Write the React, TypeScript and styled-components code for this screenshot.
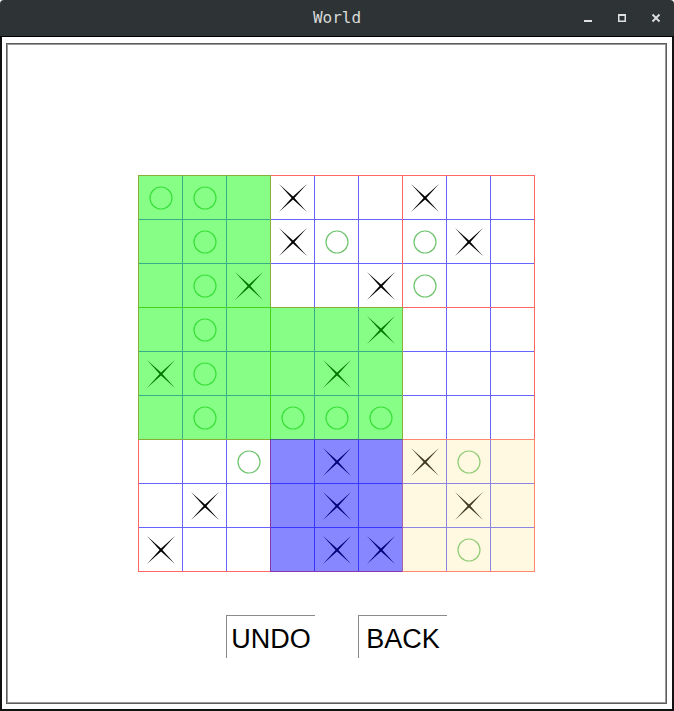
import React from "react";
import styled, { createGlobalStyle } from "styled-components";

const GlobalStyle = createGlobalStyle`
  html, body { margin: 0; padding: 0; background: #ffffff; }
  * { box-sizing: border-box; }
`;

const Window = styled.div`
  width: 674px;
  height: 711px;
  display: flex;
  flex-direction: column;
  background: #ffffff;
`;

const TitleBar = styled.div`
  height: 36px;
  flex: none;
  background: #2e3336;
  border-radius: 4px 4px 0 0;
  display: grid;
  grid-template-columns: 1fr auto 1fr;
  align-items: center;
`;

const Title = styled.div`
  grid-column: 2;
  font-family: "DejaVu Sans Mono", monospace;
  font-size: 16px;
  color: #d8dad8;
  line-height: 36px;
`;

const Controls = styled.div`
  grid-column: 3;
  justify-self: end;
  display: flex;
  margin-right: 1px;
  height: 36px;
`;

const ControlButton = styled.div`
  width: 34px;
  height: 36px;
  display: flex;
  align-items: center;
  justify-content: center;
`;

const Frame = styled.div`
  flex: 1;
  border: 2px solid #111;
  border-top: 1px solid #000;
  padding: 6px 5px 5px 4px;
  display: flex;
`;

const Canvas = styled.div`
  flex: 1;
  border: 1px solid #5c5c5c;
  box-shadow: inset 1px 1px 0 #9a9a9a, inset -1px -1px 0 #9a9a9a;
  padding: 131px 1px 0 1px;
  display: flex;
  flex-direction: column;
  align-items: center;
`;

const Board = styled.div`
  display: grid;
  grid-template-columns: repeat(3, 132px);
  grid-template-rows: repeat(3, 132px);
  border-left: 1px solid rgba(255, 0, 0, 0.6);
  border-top: 1px solid rgba(255, 0, 0, 0.6);
`;

type Fill = "none" | "green" | "blue" | "cream";

const fillColors: Record<Fill, string> = {
  none: "transparent",
  green: "rgba(0, 255, 0, 0.47)",
  blue: "rgba(0, 0, 255, 0.47)",
  cream: "rgba(255, 232, 140, 0.25)",
};

const BigCell = styled.div<{ $fill: Fill }>`
  position: relative;
  display: grid;
  grid-template-columns: 44px 44px 43px;
  grid-template-rows: 44px 44px 43px;
  border-right: 1px solid rgba(255, 0, 0, 0.6);
  border-bottom: 1px solid rgba(255, 0, 0, 0.6);

  &::after {
    content: "";
    position: absolute;
    top: -1px;
    left: -1px;
    right: -1px;
    bottom: -1px;
    background: ${(p) => fillColors[p.$fill]};
    pointer-events: none;
  }
`;

const Cell = styled.div<{ $right: boolean; $bottom: boolean }>`
  display: flex;
  align-items: center;
  justify-content: center;
  border-right: ${(p) => (p.$right ? "1px solid rgba(0, 0, 255, 0.6)" : "none")};
  border-bottom: ${(p) => (p.$bottom ? "1px solid rgba(0, 0, 255, 0.6)" : "none")};
`;

const ButtonRow = styled.div`
  display: flex;
  gap: 43px;
  margin-top: 43px;
`;

const ActionButton = styled.button`
  width: 89px;
  height: 43px;
  padding: 5px 0 0 0;
  margin: 0;
  background: #ffffff;
  border: none;
  border-top: 1px solid #8a8a8a;
  border-left: 1px solid #8a8a8a;
  font-family: "Liberation Sans", Arial, sans-serif;
  font-size: 27px;
  line-height: 37px;
  color: #000;
  text-align: center;
  white-space: nowrap;
`;

const rows = [
  "OO.X..X..",
  ".O.XO.OX.",
  ".OX..XO..",
  ".O...X...",
  "XO..X....",
  ".O.OOO...",
  "..O.X.XO.",
  ".X..X..X.",
  "X...XX.O.",
];

const fills: Fill[][] = [
  ["green", "none", "none"],
  ["green", "green", "none"],
  ["none", "blue", "cream"],
];

const XMark = () => (
  <svg width="30" height="30" viewBox="-15 -15 30 30">
    <path
      d="M-14 -14 L0 -1.4 L14 -14 L1.4 0 L14 14 L0 1.4 L-14 14 L-1.4 0 Z"
      fill="#000"
    />
  </svg>
);

const OMark = () => (
  <svg width="26" height="26" viewBox="-13 -13 26 26">
    <circle cx="0" cy="0" r="11" fill="none" stroke="rgb(110,196,110)" strokeWidth="1.2" />
  </svg>
);

const MinIcon = () => (
  <svg width="10" height="10" viewBox="0 0 10 10">
    <rect x="1" y="7" width="8" height="2" fill="#e0e0e0" />
  </svg>
);

const MaxIcon = () => (
  <svg width="10" height="10" viewBox="0 0 10 10">
    <rect x="1.75" y="1.75" width="6.5" height="6.5" fill="none" stroke="#e0e0e0" strokeWidth="1.5" />
    <rect x="1" y="1" width="8" height="2" fill="#e0e0e0" />
  </svg>
);

const CloseIcon = () => (
  <svg width="10" height="10" viewBox="0 0 10 10">
    <path d="M1.5 1.5 L8.5 8.5 M8.5 1.5 L1.5 8.5" stroke="#e0e0e0" strokeWidth="1.8" />
  </svg>
);

export default function App() {
  return (
    <>
      <GlobalStyle />
      <Window>
        <TitleBar>
          <Title>World</Title>
          <Controls>
            <ControlButton>
              <MinIcon />
            </ControlButton>
            <ControlButton>
              <MaxIcon />
            </ControlButton>
            <ControlButton>
              <CloseIcon />
            </ControlButton>
          </Controls>
        </TitleBar>
        <Frame>
          <Canvas>
            <Board>
              {[0, 1, 2].map((br) =>
                [0, 1, 2].map((bc) => (
                  <BigCell key={`${br}-${bc}`} $fill={fills[br][bc]}>
                    {[0, 1, 2].map((r) =>
                      [0, 1, 2].map((c) => {
                        const mark = rows[br * 3 + r][bc * 3 + c];
                        return (
                          <Cell key={`${r}-${c}`} $right={c < 2} $bottom={r < 2}>
                            {mark === "X" && <XMark />}
                            {mark === "O" && <OMark />}
                          </Cell>
                        );
                      })
                    )}
                  </BigCell>
                ))
              )}
            </Board>
            <ButtonRow>
              <ActionButton>UNDO</ActionButton>
              <ActionButton>BACK</ActionButton>
            </ButtonRow>
          </Canvas>
        </Frame>
      </Window>
    </>
  );
}
